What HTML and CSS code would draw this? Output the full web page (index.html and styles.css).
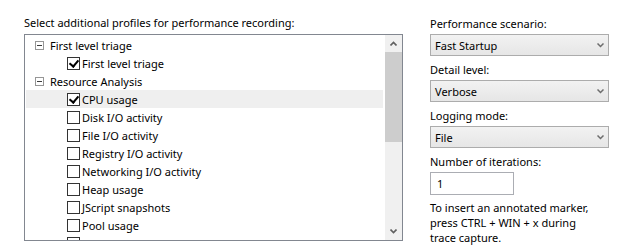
FILE: index.html
```html
<!DOCTYPE html>
<html lang="en">
<head>
  <meta charset="UTF-8" />
  <title>Performance recording</title>
  <link rel="stylesheet" href="styles.css">
</head>
<body>
<div class="dialog">
  <div class="profiles">
    <div class="caption">Select additional profiles for performance recording:</div>
    <div class="tree">
      <div class="tree-list">
        <div class="row group"><span class="expander"></span>First level triage</div>
        <div class="row item"><span class="check on"></span>First level triage</div>
        <div class="row group"><span class="expander"></span>Resource Analysis</div>
        <div class="row item selected"><span class="check on"></span>CPU usage</div>
        <div class="row item"><span class="check"></span>Disk I/O activity</div>
        <div class="row item"><span class="check"></span>File I/O activity</div>
        <div class="row item"><span class="check"></span>Registry I/O activity</div>
        <div class="row item"><span class="check"></span>Networking I/O activity</div>
        <div class="row item"><span class="check"></span>Heap usage</div>
        <div class="row item"><span class="check"></span>JScript snapshots</div>
        <div class="row item"><span class="check"></span>Pool usage</div>
        <div class="row item"><span class="check"></span>VirtualAlloc usage</div>
      </div>
      <div class="scrollbar">
        <div class="sb-btn">
          <svg width="7" height="5" viewBox="0 0 7 5"><path d="M0.5 4.5 L3.5 1.5 L6.5 4.5" fill="none" stroke="#606060" stroke-width="1.6"/></svg>
        </div>
        <div class="sb-thumb"></div>
        <div class="sb-track"></div>
        <div class="sb-btn">
          <svg width="7" height="5" viewBox="0 0 7 5"><path d="M0.5 0.5 L3.5 3.5 L6.5 0.5" fill="none" stroke="#606060" stroke-width="1.6"/></svg>
        </div>
      </div>
    </div>
  </div>

  <div class="options">
    <div class="label first">Performance scenario:</div>
    <div class="select">Fast Startup<span class="arrow"><svg width="7" height="5" viewBox="0 0 7 5"><path d="M0.5 0.5 L3.5 3.5 L6.5 0.5" fill="none" stroke="#6d6d6d" stroke-width="1.5"/></svg></span></div>

    <div class="label">Detail level:</div>
    <div class="select">Verbose<span class="arrow"><svg width="7" height="5" viewBox="0 0 7 5"><path d="M0.5 0.5 L3.5 3.5 L6.5 0.5" fill="none" stroke="#6d6d6d" stroke-width="1.5"/></svg></span></div>

    <div class="label">Logging mode:</div>
    <div class="select">File<span class="arrow"><svg width="7" height="5" viewBox="0 0 7 5"><path d="M0.5 0.5 L3.5 3.5 L6.5 0.5" fill="none" stroke="#6d6d6d" stroke-width="1.5"/></svg></span></div>

    <div class="label">Number of iterations:</div>
    <div class="textbox">1</div>

    <p class="hint">To insert an annotated marker,<br>press CTRL + WIN + x during<br>trace capture.</p>
  </div>
</div>
</body>
</html>
```

FILE: styles.css
```css
* {
  margin: 0;
  padding: 0;
  box-sizing: border-box;
}
body {
  background: #fff;
  color: #000;
  font-family: 'Noto Sans', sans-serif;
  font-size: 11px;
}
.dialog {
  display: flex;
  padding: 15px 0 0 24px;
}
.profiles {
  width: 379px;
}
.caption {
  line-height: 16px;
  margin-bottom: 3px;
}
.tree {
  display: flex;
  height: 207px;
  border: 1px solid #828790;
  overflow: hidden;
}
.tree-list {
  flex: 1;
  padding: 1px 1px 0 1px;
  overflow: hidden;
}
.row {
  display: flex;
  align-items: center;
  height: 18px;
  white-space: nowrap;
}
.row.group {
  padding-left: 9px;
}
.row.item {
  padding-left: 41px;
}
.row.selected {
  background: #efefef;
}
.expander {
  width: 9px;
  height: 9px;
  border: 1px solid #969696;
  margin-right: 6px;
  position: relative;
}
.expander::after {
  content: "";
  position: absolute;
  left: 1px;
  top: 3px;
  width: 5px;
  height: 1px;
  background: #3c3c3c;
}
.check {
  width: 13px;
  height: 13px;
  border: 1px solid #333;
  background: #fff;
  margin-right: 2px;
  position: relative;
}
.check.on::after {
  content: "";
  position: absolute;
  left: 3px;
  top: 0px;
  width: 4px;
  height: 7px;
  border: solid #000;
  border-width: 0 2px 2px 0;
  transform: rotate(40deg);
}
.scrollbar {
  width: 17px;
  display: flex;
  flex-direction: column;
  background: #f0f0f0;
  margin-left: 1px;
}
.sb-btn {
  height: 17px;
  display: flex;
  align-items: center;
  justify-content: center;
}
.sb-thumb {
  height: 90px;
  background: #cdcdcd;
}
.sb-track {
  flex: 1;
}
.options {
  margin-left: 27px;
  width: 179px;
  padding-top: 1px;
}
.label {
  line-height: 16px;
  margin-top: 6px;
  margin-bottom: 2px;
}
.label.first {
  margin-top: 0;
}
.select {
  display: flex;
  align-items: center;
  height: 22px;
  padding: 0 4px;
  border: 1px solid #acacac;
  background: linear-gradient(#f2f2f2, #e6e6e6);
}
.arrow {
  margin-left: auto;
  display: flex;
}
.textbox {
  width: 84px;
  height: 23px;
  border: 1px solid #abadb3;
  padding: 3px 6px;
  line-height: 15px;
}
.hint {
  margin-top: 5px;
  line-height: 15px;
}
```
